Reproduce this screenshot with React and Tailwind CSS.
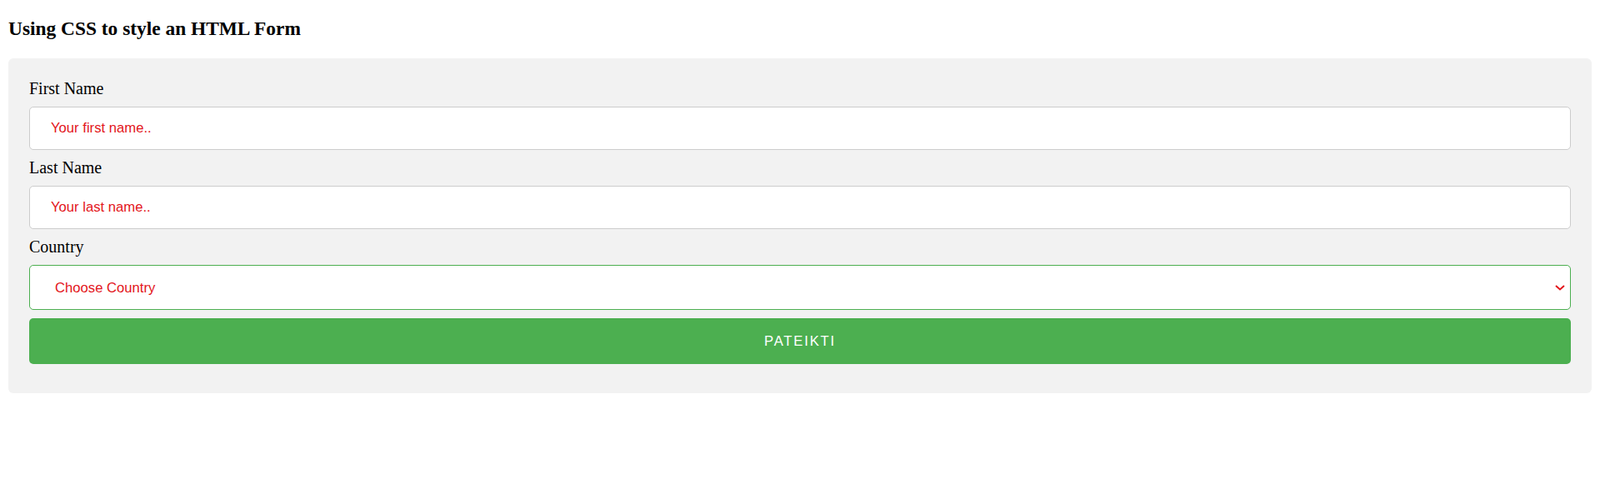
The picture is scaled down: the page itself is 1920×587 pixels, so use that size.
import React from "react";

const App = () => {
	const inputClass =
		"block w-full h-[52px] mt-[10px] mb-[10px] px-[25px] border border-[#cccccc] rounded-[5px] bg-white text-[16.67px] font-['Liberation_Sans',Arial,sans-serif] placeholder:text-[#e3151a] outline-none";

	return (
		<div className="min-h-screen bg-white text-black font-['Liberation_Serif','Times_New_Roman',serif]">
			<h3 className="mx-[10px] pt-[21px] mb-[23px] text-[23.4px] leading-[26px] font-bold">
				Using CSS to style an HTML Form
			</h3>

			<div className="mx-[10px] p-[25px] rounded-[6px] bg-[#f2f2f2]">
				<form>
					{/* First name */}
					<label className="block text-[20px] leading-[23px]">First Name</label>
					<input type="text" placeholder="Your first name.." className={inputClass} />

					{/* Last name */}
					<label className="block text-[20px] leading-[23px]">Last Name</label>
					<input type="text" placeholder="Your last name.." className={inputClass} />

					{/* Country */}
					<label className="block text-[20px] leading-[23px]">Country</label>
					<div className="relative mt-[10px] mb-[10px]">
						<select
							defaultValue=""
							className="block w-full h-[54px] pl-[30px] pr-[30px] border border-[#4caf50] rounded-[5px] bg-white text-[16.67px] text-[#e3151a] font-['Liberation_Sans',Arial,sans-serif] appearance-none outline-none"
						>
							<option value="">Choose Country</option>
							<option value="lt">Lithuania</option>
							<option value="lv">Latvia</option>
							<option value="ee">Estonia</option>
						</select>
						<svg
							className="absolute right-[7px] top-[24px] pointer-events-none"
							width="12"
							height="7"
							viewBox="0 0 12 7"
							fill="none"
						>
							<path d="M1 1l5 4.5L11 1" stroke="#e3151a" strokeWidth="2" />
						</svg>
					</div>

					{/* Submit */}
					<button
						type="submit"
						className="block w-full h-[55px] mt-[10px] mb-[10px] rounded-[5px] bg-[#4caf50] text-white text-[16.67px] tracking-[1.8px] font-['Liberation_Sans',Arial,sans-serif]"
					>
						PATEIKTI
					</button>
				</form>
			</div>
		</div>
	);
};

export default App;
